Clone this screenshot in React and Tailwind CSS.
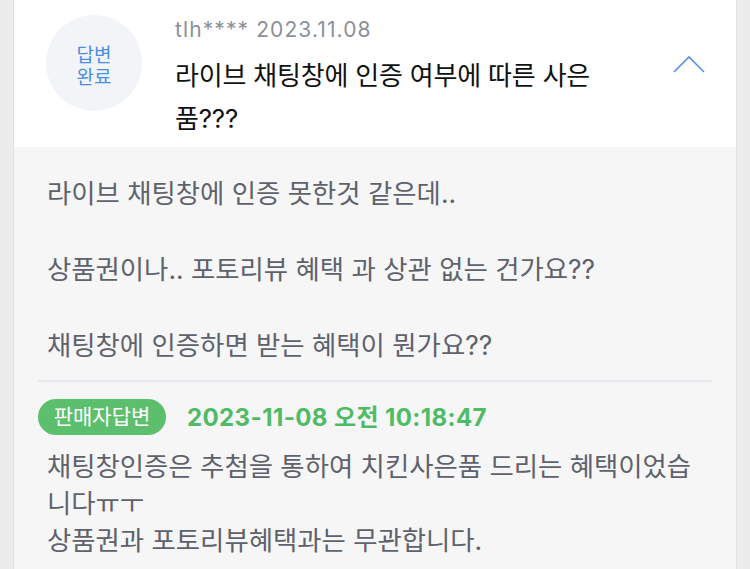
export default function App() {
	const font = { fontFamily: 'Inter, "Noto Sans CJK KR", sans-serif' };

	return (
		<div className="flex h-[569px] w-[750px] overflow-hidden bg-[#ececec]" style={font}>
			{/* left gutter */}
			<div className="w-[14px] shrink-0 border-r border-[#e2e2e2]" />

			<div className="flex w-[722px] shrink-0 flex-col">
				{/* question header */}
				<div className="flex h-[147px] shrink-0 bg-white pl-[32px] pt-[15px]">
					<div className="flex h-[96px] w-[96px] shrink-0 flex-col items-center justify-center rounded-full bg-[#f2f4f8] pt-[8px] text-[19px] leading-[22px] text-[#4b8fe2]">
						<span>답변</span>
						<span>완료</span>
					</div>
					<div className="ml-[33px] w-[425px] pt-[1px]">
						<div className="text-[21px] leading-[28px] tracking-[1.1px] text-[#8b9099]">tlh**** 2023.11.08</div>
						<div className="mt-[10px] text-[26px] leading-[43px] tracking-[-0.2px] text-[#111]">
							라이브 채팅창에 인증 여부에 따른 사은품???
						</div>
					</div>
					<div className="ml-[72px] pt-[40px]">
						<svg width="34" height="20" viewBox="0 0 34 20" fill="none">
							<polyline points="2,17 17,2 32,17" stroke="#5592e3" strokeWidth="1.6" />
						</svg>
					</div>
				</div>

				{/* question body + answer */}
				<div className="flex-1 bg-[#f6f6f6] px-[24px] pt-[27px]">
					<div className="whitespace-pre-line px-[9px] text-[26.4px] leading-[38px] text-[#5e626c]">
						{"라이브 채팅창에 인증 못한것 같은데..\n\n상품권이나.. 포토리뷰 혜택 과 상관 없는 건가요??\n\n채팅창에 인증하면 받는 혜택이 뭔가요??"}
					</div>
					<div className="mt-[16px] h-[2px] bg-[#e6eaef]" />
					<div className="mt-[16px] flex items-center">
						<span className="flex h-[36px] w-[128px] items-center justify-center rounded-full bg-[#5cbf6e] text-[21px] text-white">
							판매자답변
						</span>
						<span className="ml-[21px] pt-[2px] text-[24px] font-bold tracking-[0.4px] text-[#4fbb66]">
							2023-11-08 오전 10:18:47
						</span>
					</div>
					<div className="mt-[12px] whitespace-pre-line px-[9px] text-[26.4px] leading-[37px] text-[#5e626c]">
						{"채팅창인증은 추첨을 통하여 치킨사은품 드리는 혜택이었습니다ㅠㅜ\n상품권과 포토리뷰혜택과는 무관합니다."}
					</div>
				</div>
			</div>

			{/* right gutter */}
			<div className="flex-1 border-l border-[#e2e2e2]" />
		</div>
	);
}
